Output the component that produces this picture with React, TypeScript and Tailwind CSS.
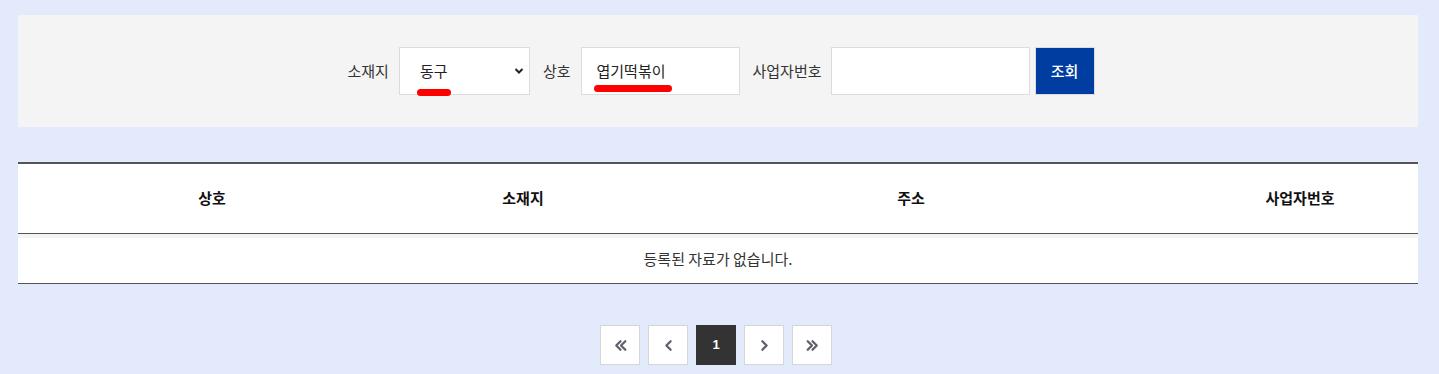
import React from "react";

const font = { fontFamily: '"Noto Sans CJK KR", "Noto Sans", sans-serif' };

function Chev({ dir, double }: { dir: "l" | "r"; double?: boolean }) {
  const l = dir === "l";
  return (
    <svg width="17" height="17" viewBox="0 0 16 16" fill="none" stroke="#5f5f6b" strokeWidth="2.1" strokeLinecap="round" strokeLinejoin="round">
      {double ? (
        l ? (
          <>
            <path d="M8 4 L4 8 L8 12" />
            <path d="M12.5 4 L8.5 8 L12.5 12" />
          </>
        ) : (
          <>
            <path d="M3.5 4 L7.5 8 L3.5 12" />
            <path d="M8 4 L12 8 L8 12" />
          </>
        )
      ) : l ? (
        <path d="M10 4 L6 8 L10 12" />
      ) : (
        <path d="M6 4 L10 8 L6 12" />
      )}
    </svg>
  );
}

export default function App() {
  return (
    <div className="min-h-[374px] w-full bg-[#e2eafc] pl-[18px] pt-[15px] pb-[8px]" style={font}>
      <div className="w-[1400px]">
        <div className="flex h-[112px] items-center justify-center bg-[#f4f4f4] pl-[6px] text-[15px] text-[#333]">
          <span className="mr-[10px]">소재지</span>
          <div className="relative flex h-[48px] w-[131px] items-center border border-[#dcdcdc] bg-white pl-[20px]">
            <span className="text-[#222]">동구</span>
            <svg className="absolute right-[5px] top-[19px]" width="10" height="8" viewBox="0 0 10 8" fill="none" stroke="#222" strokeWidth="2">
              <path d="M1.5 2 L5 5.5 L8.5 2" />
            </svg>
            <div className="absolute left-[17px] top-[41px] h-[7px] w-[34px] rounded-full bg-[#ff0000]" />
          </div>
          <span className="ml-[13px] mr-[10px]">상호</span>
          <div className="relative flex h-[48px] w-[159px] items-center border border-[#dcdcdc] bg-white pl-[15px]">
            <span className="text-[#222]">엽기떡볶이</span>
            <div className="absolute left-[12px] top-[37px] h-[7px] w-[78px] rounded-full bg-[#ff0000]" />
          </div>
          <span className="ml-[13px] mr-[9px]">사업자번호</span>
          <div className="h-[48px] w-[199px] border border-[#dcdcdc] bg-white" />
          <button className="ml-[5px] flex h-[48px] w-[60px] items-center justify-center border border-[#dcdcdc] bg-[#003da0] text-[15px] font-medium text-white">
            조회
          </button>
        </div>

        <div className="mt-[35px] border-t-2 border-[#555] bg-white">
          <div className="grid h-[70px] grid-cols-[388px_234px_542px_236px] items-center border-b border-[#555] text-[15px] font-bold text-[#111]">
            <div className="text-center">상호</div>
            <div className="text-center">소재지</div>
            <div className="text-center">주소</div>
            <div className="text-center">사업자번호</div>
          </div>
          <div className="h-[4px] bg-[#f4f4f4]" />
          <div className="flex h-[46px] items-center justify-center border-b border-[#555] pb-[3px] text-[15px] text-[#333]">
            등록된 자료가 없습니다.
          </div>
        </div>

        <div className="mt-[41px] flex justify-center gap-[8px] pr-[4px]">
          <div className="flex h-[40px] w-[40px] items-center justify-center border border-[#d6d6d6] bg-white">
            <Chev dir="l" double />
          </div>
          <div className="flex h-[40px] w-[40px] items-center justify-center border border-[#d6d6d6] bg-white">
            <Chev dir="l" />
          </div>
          <div className="flex h-[40px] w-[40px] items-center justify-center bg-[#333] text-[13px] font-bold text-white" style={{ fontFamily: '"Liberation Sans", sans-serif' }}>
            1
          </div>
          <div className="flex h-[40px] w-[40px] items-center justify-center border border-[#d6d6d6] bg-white">
            <Chev dir="r" />
          </div>
          <div className="flex h-[40px] w-[40px] items-center justify-center border border-[#d6d6d6] bg-white">
            <Chev dir="r" double />
          </div>
        </div>
      </div>
    </div>
  );
}
